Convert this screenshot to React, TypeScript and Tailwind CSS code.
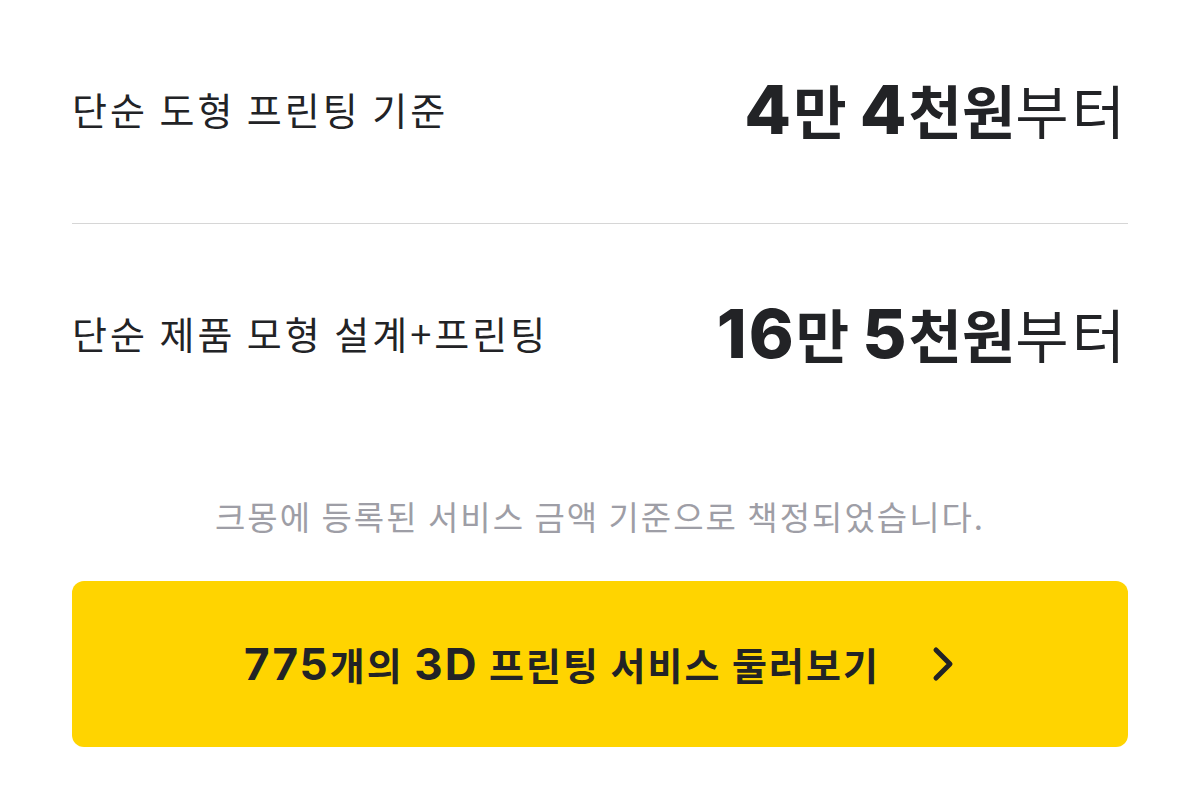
import React from "react";

const kr = '"Noto Sans CJK KR", "Noto Sans", sans-serif';
const latin = 'Inter, "Noto Sans CJK KR", sans-serif';

// Digits and Latin letters are set in Inter, a touch larger than the Hangul around them.
function Num({ children, className }: { children: React.ReactNode; className: string }) {
  return (
    <span className={className} style={{ fontFamily: latin }}>
      {children}
    </span>
  );
}

function PriceRow({ label, man, chun }: { label: string; man: string; chun: string }) {
  return (
    <div className="flex h-[223px] items-center justify-between pb-[6px]">
      <span className="text-[38px] tracking-[3px] text-[#222326]">{label}</span>
      <span className="whitespace-nowrap leading-none text-[#222326]">
        <Num className="text-[68px] font-extrabold tracking-[2px]">{man}</Num>
        <span className="text-[58px] font-bold">만&nbsp;</span>
        <Num className="text-[68px] font-extrabold tracking-[2px]">{chun}</Num>
        <span className="text-[58px] font-bold">천원</span>
        <span className="text-[58px] tracking-[3px]">부터</span>
      </span>
    </div>
  );
}

export default function App() {
  return (
    <div className="min-h-[800px] w-[1200px] bg-white px-[72px]" style={{ fontFamily: kr }}>
      <PriceRow label="단순 도형 프린팅 기준" man="4" chun="4" />
      <div className="h-px bg-[#d6d6d6]" />
      <PriceRow label="단순 제품 모형 설계+프린팅" man="16" chun="5" />
      <p className="mt-[49px] text-center text-[33px] leading-[40px] tracking-[2px] text-[#9e9ea6]">
        크몽에 등록된 서비스 금액 기준으로 책정되었습니다.
      </p>
      <button className="mt-[45px] flex h-[166px] w-full items-center justify-center gap-[50px] rounded-[12px] bg-[#ffd400] text-[#222326]">
        <span className="whitespace-nowrap text-[38px] font-bold leading-none tracking-[2px]">
          <Num className="text-[44px] font-bold">775</Num>개의 <Num className="text-[44px] font-bold">3D</Num> 프린팅 서비스 둘러보기
        </span>
        <svg width="26" height="36" viewBox="0 0 26 36" fill="none" stroke="#222326" strokeWidth="5" strokeLinecap="round" strokeLinejoin="round">
          <path d="M6 4 L20 18 L6 32" />
        </svg>
      </button>
    </div>
  );
}
